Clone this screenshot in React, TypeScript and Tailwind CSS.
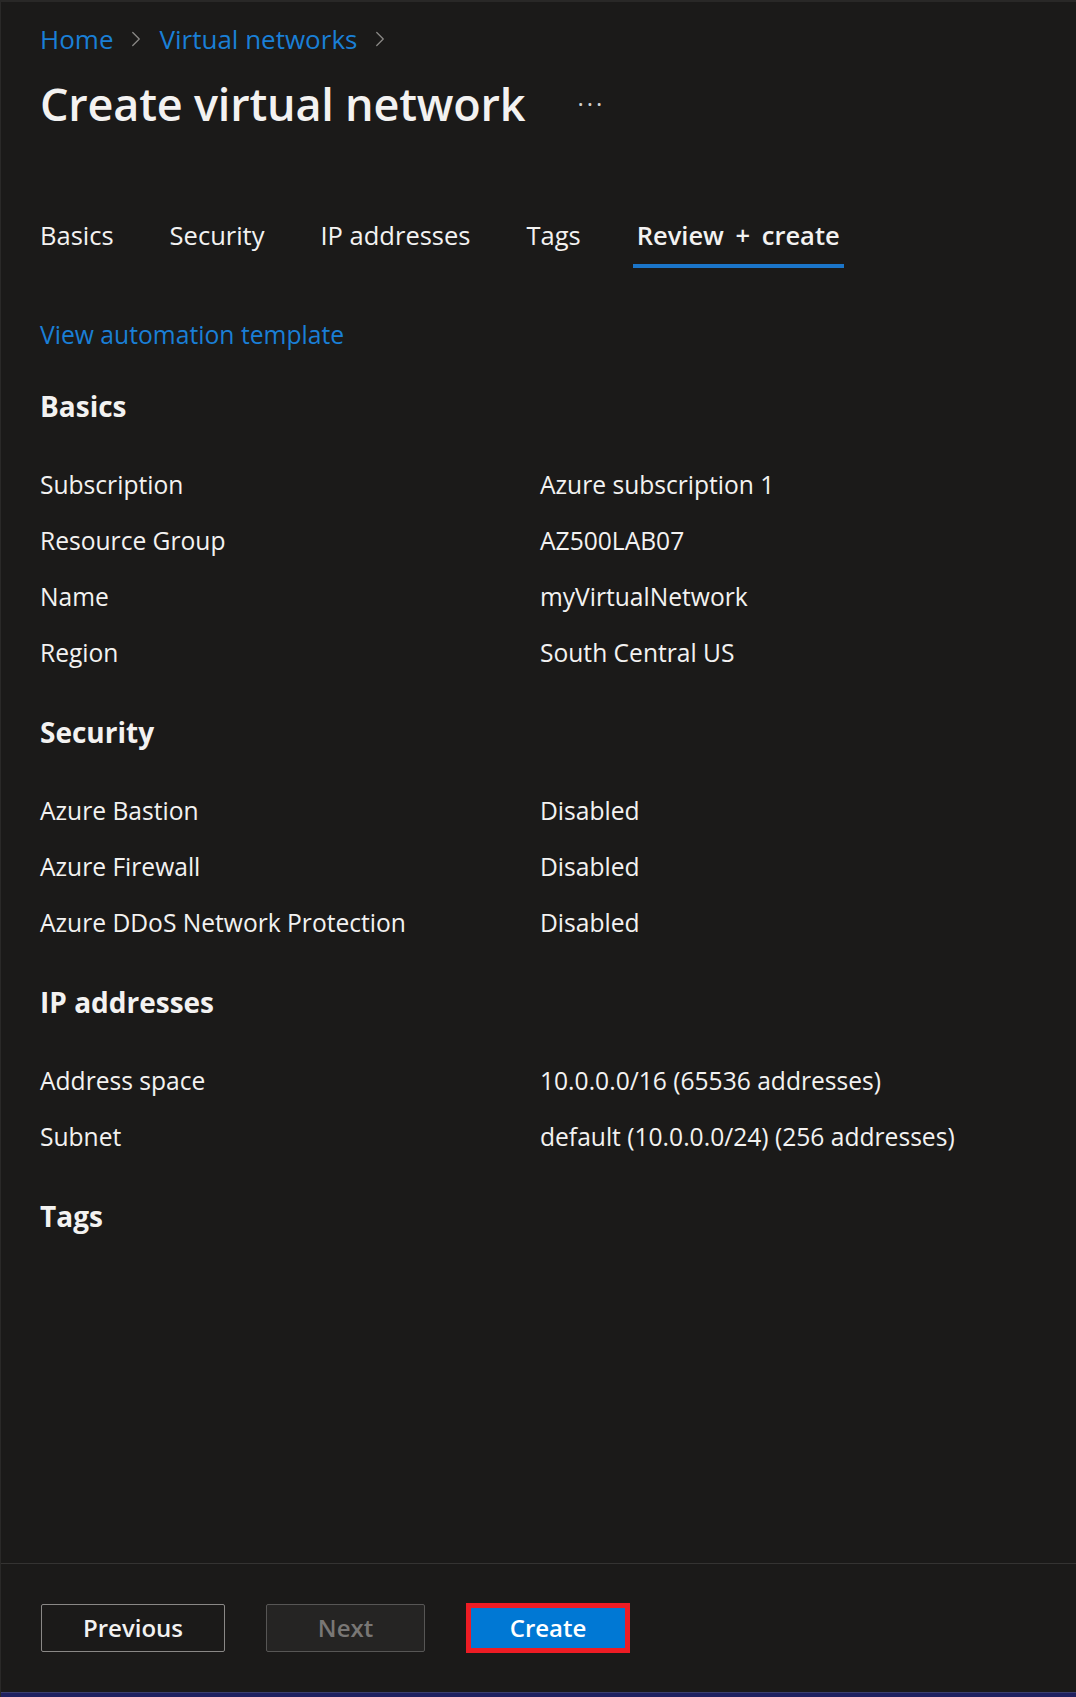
import { ChevronRight } from 'lucide-react';

type Row = { label: string; value: string };

const sections: { title: string; rows: Row[] }[] = [
  {
    title: 'Basics',
    rows: [
      { label: 'Subscription', value: 'Azure subscription 1' },
      { label: 'Resource Group', value: 'AZ500LAB07' },
      { label: 'Name', value: 'myVirtualNetwork' },
      { label: 'Region', value: 'South Central US' },
    ],
  },
  {
    title: 'Security',
    rows: [
      { label: 'Azure Bastion', value: 'Disabled' },
      { label: 'Azure Firewall', value: 'Disabled' },
      { label: 'Azure DDoS Network Protection', value: 'Disabled' },
    ],
  },
  {
    title: 'IP addresses',
    rows: [
      { label: 'Address space', value: '10.0.0.0/16 (65536 addresses)' },
      { label: 'Subnet', value: 'default (10.0.0.0/24) (256 addresses)' },
    ],
  },
  { title: 'Tags', rows: [] },
];

const tabs = ['Basics', 'Security', 'IP addresses', 'Tags', 'Review + create'];

function Section({ title, rows }: { title: string; rows: Row[] }) {
  return (
    <section className="flex flex-col">
      <h2 className="h-[56px] flex items-center text-[28px] font-bold text-[#f3f2f1]">{title}</h2>
      {rows.length > 0 && (
        <div className="mt-[23px] mb-[23px] flex flex-col">
          {rows.map((r) => (
            <div key={r.label} className="h-[56px] grid grid-cols-[500px_1fr] items-center text-[24.6px] text-[#f3f2f1]">
              <span>{r.label}</span>
              <span>{r.value}</span>
            </div>
          ))}
        </div>
      )}
    </section>
  );
}

export default function App() {
  return (
    <div
      className="w-[1076px] h-[1697px] bg-[#1b1a19] flex flex-col border-t-2 border-t-[#292827] border-l border-l-[#2a2928] overflow-hidden"
      style={{ fontFamily: '"Open Sans", "Noto Sans", sans-serif' }}
    >
      <main className="flex-1 pl-[39px] pt-[19px]">
        {/* Breadcrumb */}
        <nav className="h-[36px] flex items-center text-[26px] text-[#1a7fd6]">
          <a href="#">Home</a>
          <ChevronRight className="w-[26px] h-[26px] mx-[10px] text-[#8a8886]" strokeWidth={1.2} />
          <a href="#">Virtual networks</a>
          <ChevronRight className="w-[26px] h-[26px] mx-[10px] text-[#8a8886]" strokeWidth={1.2} />
        </nav>

        {/* Title */}
        <div className="mt-[19px] h-[56px] flex items-center">
          <h1 className="text-[45px] font-semibold text-[#f3f2f1] tracking-[-0.2px]">Create virtual network</h1>
          <span className="ml-[52px] text-[24px] text-[#d2d0ce] tracking-[3px]">···</span>
        </div>

        {/* Tabs */}
        <div className="mt-[85px] -ml-[4px] flex gap-[48px]">
          {tabs.map((t, i) => {
            const active = i === tabs.length - 1;
            return (
              <button key={t} className="flex flex-col">
                <span
                  className={`h-[36px] px-[4px] flex items-center text-[25.5px] text-[#f3f2f1] ${
                    active ? 'font-semibold [word-spacing:5px]' : ''
                  }`}
                >
                  {t}
                </span>
                <span className={`mt-[11px] h-[4px] ${active ? 'bg-[#1b75c9]' : 'bg-transparent'}`} />
              </button>
            );
          })}
        </div>

        <a href="#" className="mt-[49px] h-[36px] flex items-center text-[24.7px] text-[#1a7fd6]">
          View automation template
        </a>

        <div className="mt-[25px] flex flex-col">
          {sections.map((s) => (
            <Section key={s.title} title={s.title} rows={s.rows} />
          ))}
        </div>
      </main>

      {/* Footer */}
      <footer className="border-t border-t-[#343332] h-[129px] pl-[40px] flex items-center gap-[41px] pb-[1px]">
        <button className="w-[184px] h-[48px] rounded-[2px] border border-[#8a8886] text-[24px] font-semibold text-[#f3f2f1]">
          Previous
        </button>
        <button className="w-[159px] h-[48px] rounded-[2px] border border-[#575655] bg-[#252423] text-[24px] font-semibold text-[#797775]">
          Next
        </button>
        <button className="w-[164px] h-[50px] border-[5px] border-[#ed1c24] bg-[#0078d4] text-[24px] font-semibold text-white">
          Create
        </button>
      </footer>
      <div className="h-[5px] bg-[#1f2060] border-t border-t-[#3c3f70]" />
    </div>
  );
}
